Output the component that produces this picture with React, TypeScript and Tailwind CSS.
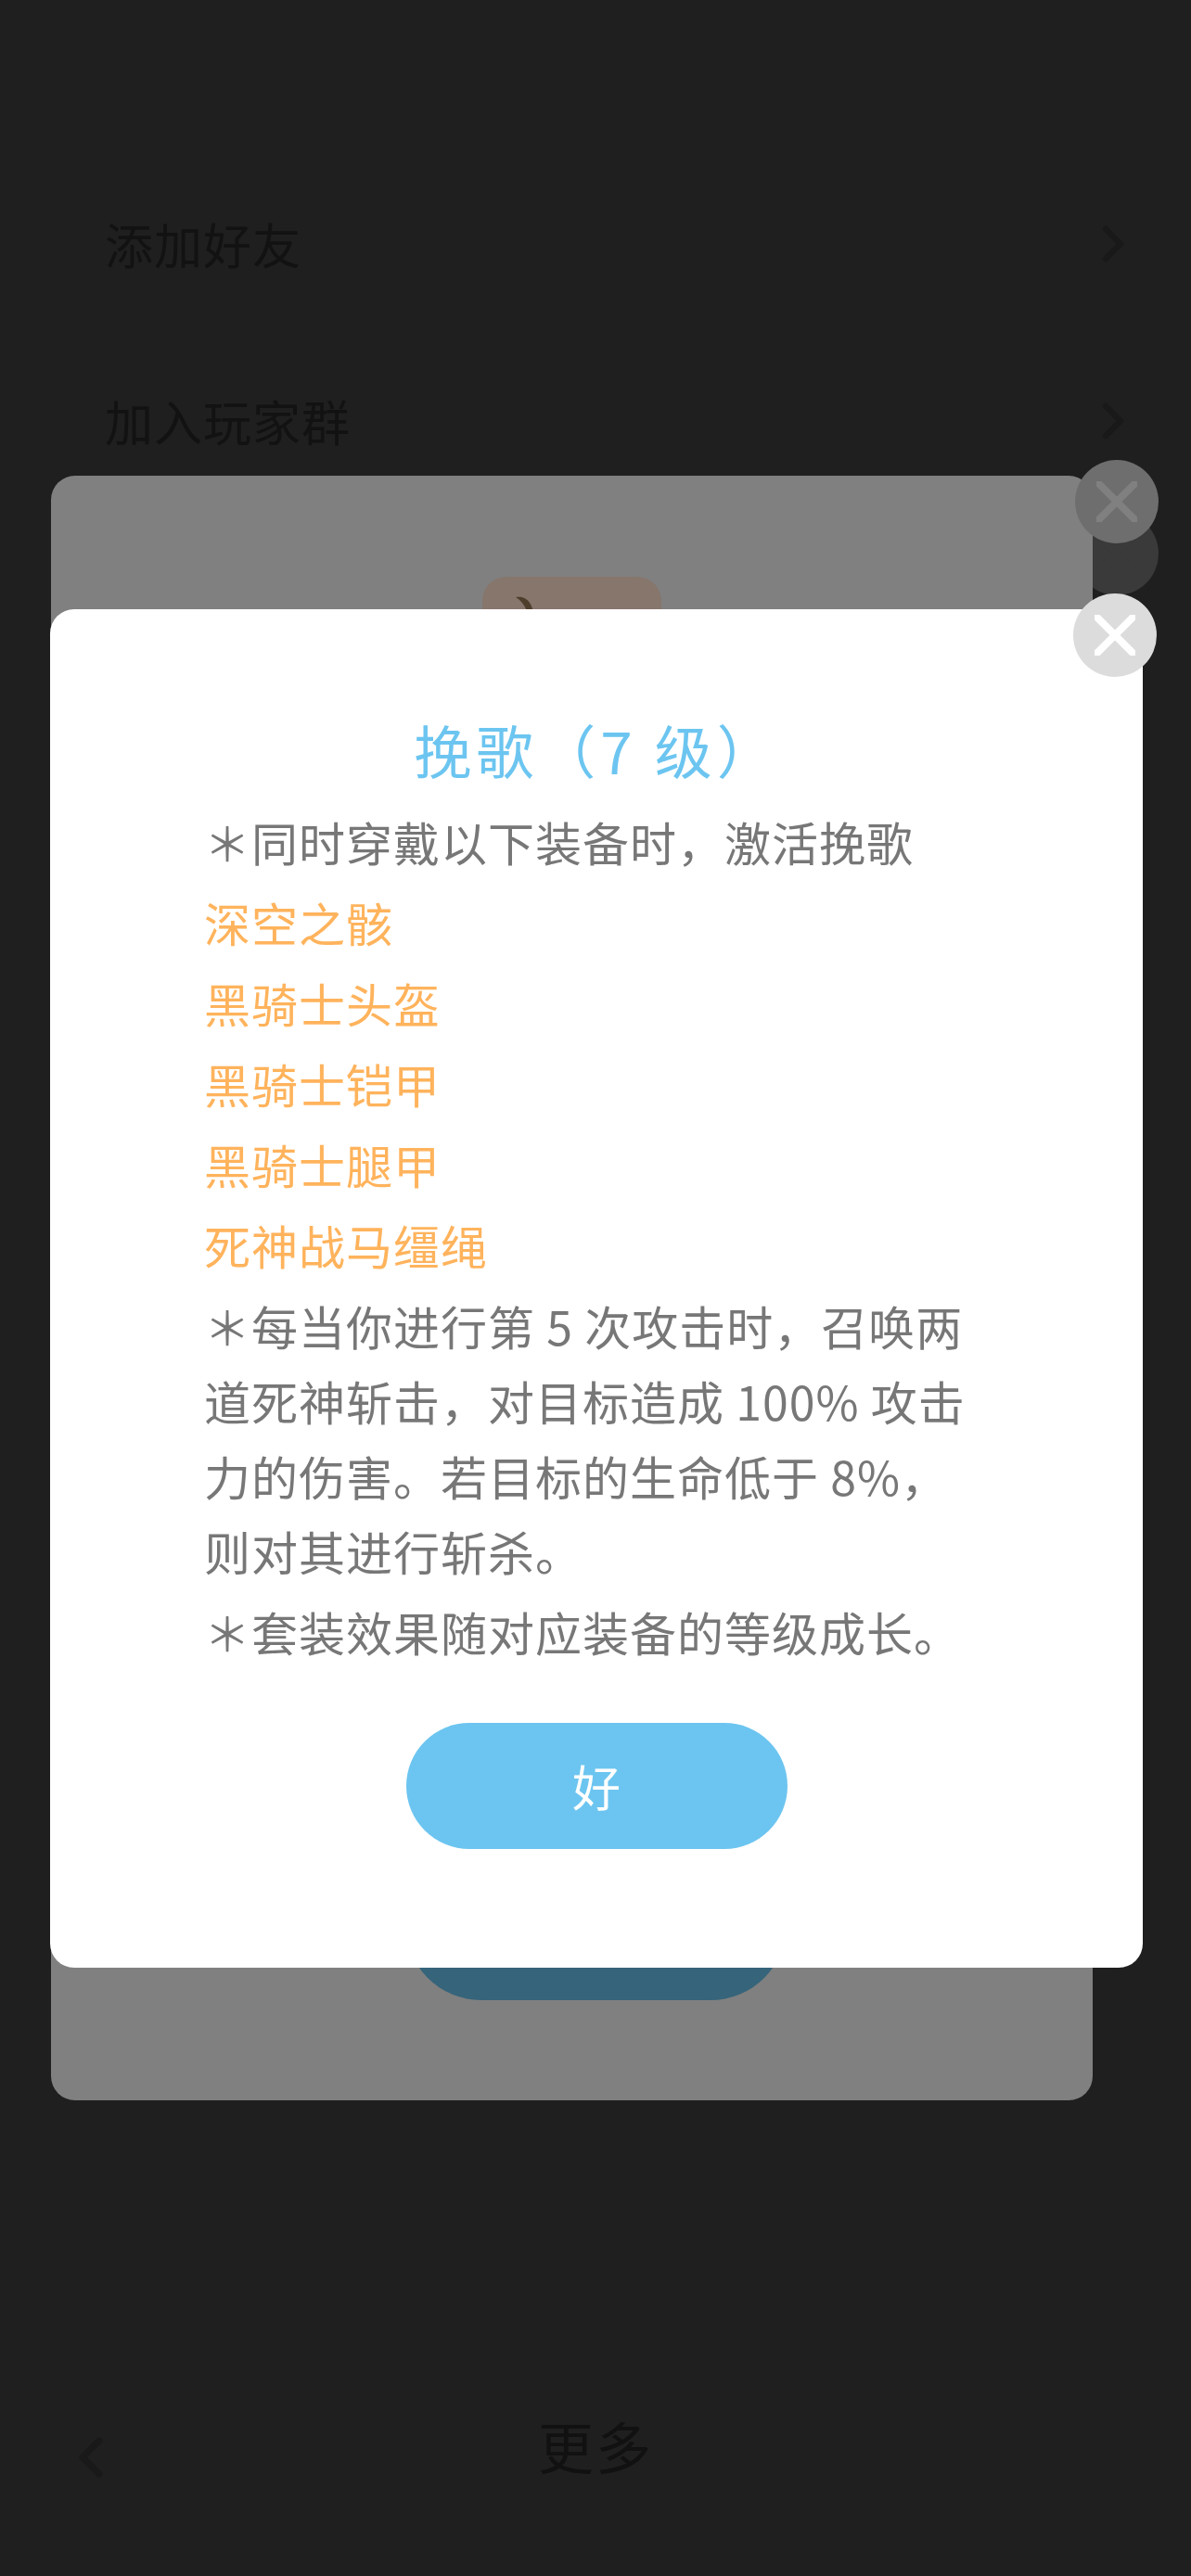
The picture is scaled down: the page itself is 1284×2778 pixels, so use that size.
import React from 'react';
import { ChevronLeft, ChevronRight } from 'lucide-react';

const CloseButton: React.FC<{ className: string; stroke: string }> = ({ className, stroke }) => (
  <div className={`absolute w-[90px] h-[90px] rounded-full flex items-center justify-center ${className}`}>
    <svg width="44" height="44" viewBox="0 0 44 44" fill="none">
      <path d="M3 3 L41 41 M41 3 L3 41" stroke={stroke} strokeWidth="8" strokeLinecap="round" />
    </svg>
  </div>
);

const Row: React.FC<{ label: string }> = ({ label }) => (
  <div className="h-[191px] flex items-center justify-between pl-[113px] pr-[52px]">
    <span className="text-[52px] tracking-[1px] text-[#121212]">{label}</span>
    <ChevronRight size={64} strokeWidth={2.4} className="text-[#191919]" />
  </div>
);

const gear = ['深空之骸', '黑骑士头盔', '黑骑士铠甲', '黑骑士腿甲', '死神战马缰绳'];

export default function App() {
  return (
    <div className="relative w-[1284px] h-[2778px] overflow-hidden bg-[#1f1f1f] font-['Noto_Sans_CJK_SC','Noto_Sans',sans-serif]">
      {/* page under the dialogs */}
      <div className="pt-[167px]">
        <Row label="添加好友" />
        <Row label="加入玩家群" />
      </div>
      <CloseButton className="left-[1159px] top-[552px] bg-[#3a3a3a]" stroke="#3a3a3a" />

      <div className="absolute left-0 right-0 bottom-0 h-[200px] flex items-start justify-center pt-[14px]">
        <ChevronLeft size={72} strokeWidth={2.4} className="absolute left-[62px] top-[36px] text-[#191919]" />
        <span className="text-[60px] tracking-[2px] text-[#111111]">更多</span>
      </div>

      {/* first dialog, dimmed */}
      <div className="absolute left-[55px] top-[513px] w-[1123px] h-[1752px] rounded-[26px] bg-[#808080] flex flex-col items-center">
        <div className="mt-[109px] w-[193px] h-[120px] rounded-[26px] bg-[#86766c] pl-[36px] pt-[20px]">
          <svg width="24" height="40" viewBox="0 0 24 40" fill="none">
            <path d="M0 2 C12 0 22 8 20 40 L14 40 C16 20 10 8 0 2 Z" fill="#4d3f2c" />
          </svg>
        </div>
        <div className="absolute left-[382px] top-[1480px] w-[411px] h-[164px] rounded-full bg-[#36647a]" />
      </div>
      <CloseButton className="left-[1159px] top-[496px] bg-[#6e6e6e]" stroke="#808080" />

      {/* second dialog */}
      <div className="absolute left-[54px] top-[657px] w-[1178px] h-[1465px] rounded-[26px] bg-white flex flex-col items-center">
        <h2 className="mt-[107px] text-[62px] leading-[88px] tracking-[5px] font-normal text-[#6cc5f0]">挽歌（7 级）</h2>
        <div className="mt-[15px] w-[846px] text-[50px] leading-[81px] tracking-[1px] text-[#777777] flex flex-col gap-[6px]">
          <p>＊同时穿戴以下装备时，激活挽歌</p>
          {gear.map(item => (
            <p key={item} className="text-[#ffb35c]">{item}</p>
          ))}
          <p>＊每当你进行第 5 次攻击时，召唤两道死神斩击，对目标造成 100% 攻击力的伤害。若目标的生命低于 8%，则对其进行斩杀。</p>
          <p>＊套装效果随对应装备的等级成长。</p>
        </div>
        <button className="mt-[58px] w-[411px] h-[136px] rounded-full bg-[#6cc5f0] text-white text-[52px]">好</button>
      </div>
      <CloseButton className="left-[1157px] top-[640px] bg-[#dcdcdc]" stroke="#ffffff" />
    </div>
  );
}
